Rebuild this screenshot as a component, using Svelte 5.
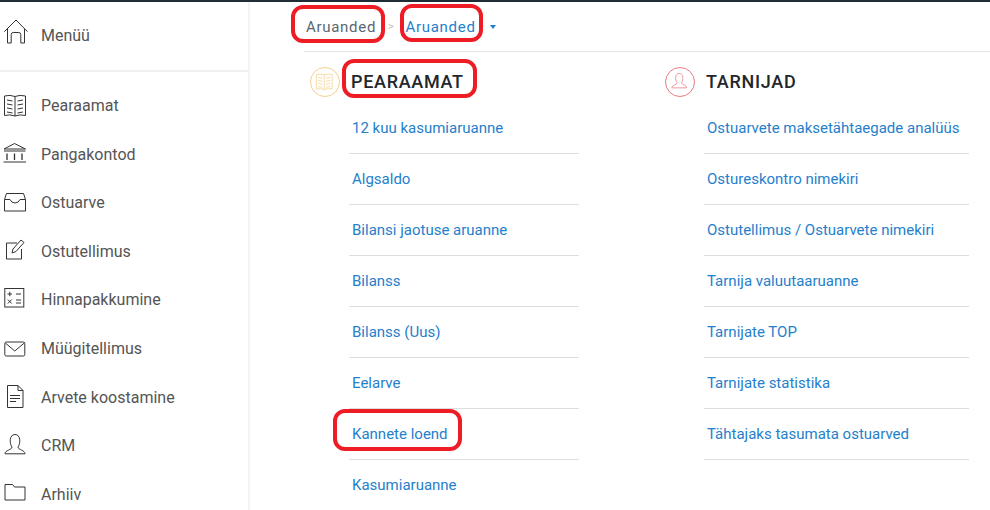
<script>
  const ledger = ['12 kuu kasumiaruanne','Algsaldo','Bilansi jaotuse aruanne','Bilanss','Bilanss (Uus)','Eelarve','Kannete loend','Kasumiaruanne'];
  const suppliers = ['Ostuarvete maksetähtaegade analüüs','Ostureskontro nimekiri','Ostutellimus / Ostuarvete nimekiri','Tarnija valuutaaruanne','Tarnijate TOP','Tarnijate statistika','Tähtajaks tasumata ostuarved'];
  const menu = [
    ['Pearaamat','book'],['Pangakontod','bank'],['Ostuarve','inbox'],['Ostutellimus','edit'],
    ['Hinnapakkumine','calc'],['Müügitellimus','mail'],['Arvete koostamine','doc'],['CRM','user'],['Arhiiv','folder']
  ];
</script>

{#snippet icon(name)}
  <svg class="ico" viewBox="0 0 24 24" fill="none" stroke="#333" stroke-width="1">
    {#if name === 'home'}
      <path d="M0.3 8.7 L12 -3 L23.5 8.7 M3.5 6 V20 H7.2 V11.5 Q7.2 9.5 9.2 9.5 H14.8 Q16.8 9.5 16.8 11.5 V20 H20.5 V6"/>
    {:else if name === 'book'}
      <path d="M0.5 2 Q6 0.5 11 2.5 Q16 0.5 21.5 2 V21.5 Q16 20 11 22 Q6 20 0.5 21.5 Z M11 2.5 V22"/>
      <path d="M3 6 L8.5 7 M3 10 L8.5 11 M3 14 L8.5 15 M3 18 L8.5 19 M13.5 7 L19 6 M13.5 11 L19 10 M13.5 15 L19 14 M13.5 19 L19 18"/>
    {:else if name === 'bank'}
      <path d="M0 7 L10.5 1.5 L21.5 7 Z M0 9 H21.5 M-0.5 20 H22" />
      <path d="M3 11.5 V18 M10.5 11.5 V18 M18 11.5 V18" stroke-width="1.3"/>
    {:else if name === 'inbox'}
      <path d="M2.5 2.5 H19.5 L21.5 8.5 V20 H0.5 V8.5 Z M0.5 8.5 H6 Q7.500 12 11 12 Q14.500 12 16 8.500 H21.500"/>
    {:else if name === 'edit'}
      <path d="M13 4 H2.5 V20 H17.5 V10"/>
      <path d="M8 14 L9 10 L17 1 L20 3.5 L12 12.5 Z"/>
    {:else if name === 'calc'}
      <rect x="0.8" y="0.5" width="19" height="18.5"/>
      <path d="M3.5 6 H8 M5.75 3.8 V8.2 M12 6 H17 M3.8 11.5 L7.7 15.5 M7.7 11.5 L3.8 15.5 M12 12 H17 M12 15 H17"/>
    {:else if name === 'mail'}
      <rect x="0.8" y="5" width="20" height="14" rx="1.5"/>
      <path d="M1.3 6 L10.8 14 L20.3 6"/>
    {:else if name === 'doc'}
      <path d="M3.5 0.5 H14 L19 5.5 V22.5 H3.5 Z M14 0.5 V5.5 H19 M6 10.5 H16 M6 13.5 H16 M6 16.5 H12"/>
    {:else if name === 'user'}
      <path d="M8 13 C5 9 5.500 0.500 11 0.500 C16.500 0.500 17 9 14 13 C14 16 21 16 21 19.800 H1 C1 16 8 16 8 13 Z"/>
    {:else if name === 'folder'}
      <path d="M1 2.500 H8.500 L10.500 5 H21 V18 H1 Z"/>
    {/if}
  </svg>
{/snippet}

<div class="page">
  <div class="topline"></div>
  <div class="body">
    <aside class="side">
      <div class="head">
        <span class="slot home">{@render icon('home')}</span>
        <span>Menüü</span>
      </div>
      <nav class="items">
        {#each menu as [label, name]}
          <div class="item"><span class="slot {name}">{@render icon(name)}</span><span>{label}</span></div>
        {/each}
      </nav>
    </aside>
    <main class="main">
      <div class="crumbs">
        <span class="crumb">Aruanded</span>
        <span class="sep">&gt;</span>
        <span class="crumb link">Aruanded</span>
        <span class="caret"></span>
      </div>
      <div class="cols">
        <section class="col first">
          <div class="title">
            <span class="circle gold">{@render icon('book')}</span>
            <h2>PEARAAMAT</h2>
          </div>
          <ul>
            {#each ledger as l}<li>{l}</li>{/each}
          </ul>
        </section>
        <section class="col second">
          <div class="title">
            <span class="circle red">{@render icon('user')}</span>
            <h2>TARNIJAD</h2>
          </div>
          <ul>
            {#each suppliers as l}<li>{l}</li>{/each}
          </ul>
        </section>
      </div>
    </main>
  </div>
  <div class="mark m1"></div>
  <div class="mark m2"></div>
  <div class="mark m3"></div>
  <div class="mark m4"></div>
</div>

<style>
  :global(body) { margin: 0; background: #fff; }
  .page {
    position: relative;
    width: 990px;
    height: 510px;
    overflow: hidden;
    background: #fff;
    font-family: Roboto, "Liberation Sans", sans-serif;
  }
  .topline { height: 2px; background: #1f2d36; }
  .body { display: flex; height: 508px; }
  .side {
    width: 248px;
    flex: none;
    border-right: 2px solid #f3f3f3;
    color: #555;
    font-size: 16px;
  }
  .head {
    display: flex;
    align-items: center;
    height: 66px;
    padding-bottom: 2px;
    border-bottom: 2px solid #f0f0f0;
    padding-left: 4px;
  }
  .slot { width: 37px; flex: none; display: flex; }
  .ico { display: block; width: 24px; height: 24px; overflow: visible; }
  .items { padding-top: 9.3px; }
  .item { display: flex; align-items: center; height: 48.6px; padding-left: 4px; }
  .main { flex: 1; min-width: 0; padding-left: 54px; }
  .crumbs {
    display: flex;
    align-items: center;
    height: 49px;
    border-bottom: 1px solid #e6e6e6;
    padding-left: 2px;
    font-size: 15px;
    letter-spacing: 0.7px;
    color: #5b6670;
  }
  .sep { color: #bbb; font-size: 11px; margin: 0 11px 0 12px; }
  .link { color: #2580cc; }
  .caret {
    margin-left: 14px;
    margin-top: 1px;
    width: 0;
    height: 0;
    border-left: 3px solid transparent;
    border-right: 3px solid transparent;
    border-top: 4px solid #1c7fcf;
  }
  .cols { display: flex; padding-left: 6px; }
  .col { flex: none; }
  .first { width: 355px; }
  .second { width: 310px; }
  .title { display: flex; align-items: center; height: 30px; margin-top: 15px; }
  .circle {
    width: 30px;
    height: 30px;
    box-sizing: border-box;
    border: 1px solid;
    border-radius: 50%;
    display: flex;
    align-items: center;
    justify-content: center;
    flex: none;
  }
  .circle .ico { width: 18px; height: 18px; }
  .gold { border-color: #f3d08e; }
  .gold :global(path) { stroke: #f3d08e; }
  .red { border-color: #e57c82; }
  .red :global(path) { stroke: #e57c82; }
  h2 {
    margin: 0 0 2px 11px;
    font-size: 18px;
    font-weight: 500;
    letter-spacing: 0.7px;
    color: #22272b;
  }
  ul { list-style: none; margin: 6px 0 0 39px; padding: 0; }
  .first ul { width: 230px; }
  .second ul { width: 265px; }
  li {
    height: 50px;
    line-height: 50px;
    border-bottom: 1px solid #dedede;
    padding-left: 3px;
    font-size: 15px;
    color: #2580cc;
    white-space: nowrap;
  }
  .mark {
    position: absolute;
    border: 4.5px solid #ee1c25;
    border-radius: 12px;
    box-sizing: border-box;
  }
  .m1 { left: 291px; top: 5px; width: 94px; height: 38px; }
  .m2 { left: 400px; top: 4px; width: 83px; height: 38px; }
  .m3 { left: 342px; top: 59px; width: 135px; height: 39px; }
  .m4 { left: 333px; top: 409px; width: 129px; height: 42px; }
</style>
